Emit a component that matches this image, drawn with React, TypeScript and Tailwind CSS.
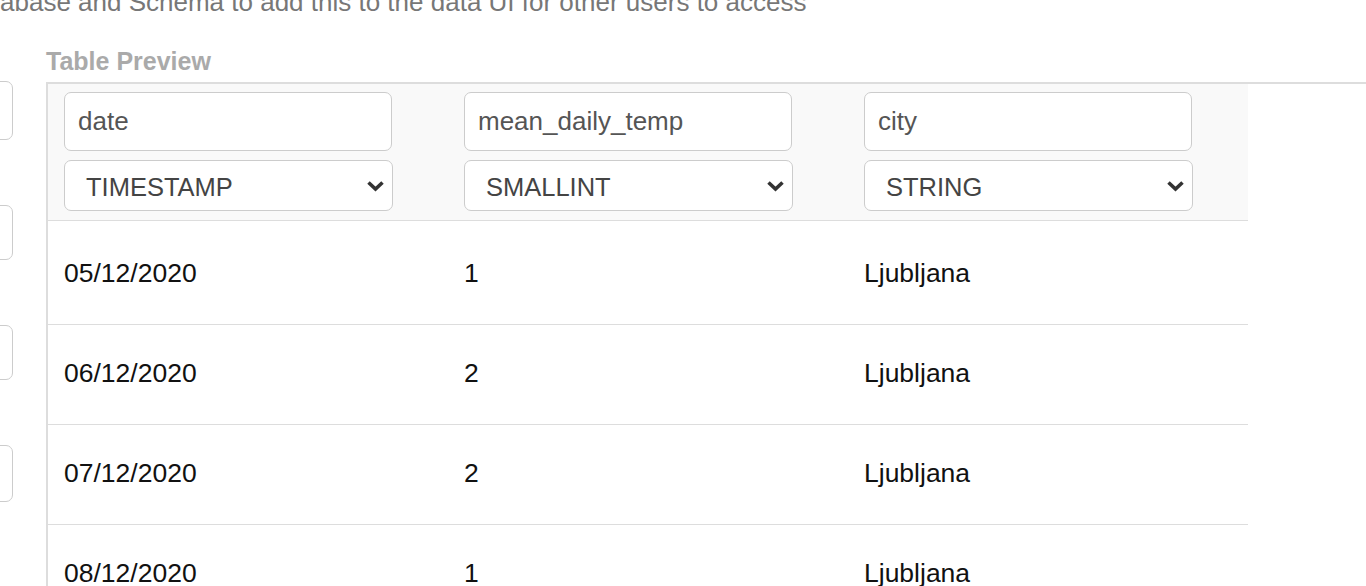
import React from 'react';

const columns = [
  { name: 'date', type: 'TIMESTAMP' },
  { name: 'mean_daily_temp', type: 'SMALLINT' },
  { name: 'city', type: 'STRING' },
];

const rows = [
  ['05/12/2020', '1', 'Ljubljana'],
  ['06/12/2020', '2', 'Ljubljana'],
  ['07/12/2020', '2', 'Ljubljana'],
  ['08/12/2020', '1', 'Ljubljana'],
];

const Chevron = () => (
  <svg width="19" height="12" viewBox="0 0 19 12" className="text-[#333]">
    <path d="M2.5 2.5 L9.5 9 L16.5 2.5" fill="none" stroke="currentColor" strokeWidth="3.6" strokeLinejoin="miter" />
  </svg>
);

export default function App() {
  return (
    <div className="h-[586px] w-[1366px] overflow-hidden bg-white font-['Liberation_Sans',Arial,sans-serif]">
      <div className="-mt-[11px] whitespace-nowrap text-[26px] leading-[26px] text-[#777]">
        abase and Schema to add this to the data UI for other users to access
      </div>

      <div className="flex">
        {/* fields of the form to the left, mostly scrolled out of view */}
        <div className="flex w-[13px] shrink-0 flex-col items-end overflow-hidden">
          <div className="mt-[66px] h-[59px] w-[60px] shrink-0 rounded-[7px] border border-[#ccc]" />
          <div className="mt-[65px] h-[55px] w-[60px] shrink-0 rounded-[7px] border border-[#ccc]" />
          <div className="mt-[65px] h-[55px] w-[60px] shrink-0 rounded-[7px] border border-[#ccc]" />
          <div className="mt-[65px] h-[57px] w-[60px] shrink-0 rounded-[7px] border border-[#ccc]" />
        </div>

        <div className="ml-[33px] flex-1">
          <div className="mt-[34px] text-[25px] font-bold leading-[25px] text-[#aaa]">Table Preview</div>

          <div className="mt-[8px] border-l-2 border-t-2 border-[#ddd]">
            <div className="w-[1200px]">
              <div className="flex h-[137px] border-b border-[#ddd] bg-[#f9f9f9]">
                {columns.map((col) => (
                  <div key={col.name} className="flex w-[400px] flex-col gap-[9px] px-4 pt-2">
                    <div className="flex h-[59px] w-[328px] items-center rounded-[7px] border border-[#ccc] bg-white px-[13px] text-[26px] text-[#555]">
                      {col.name}
                    </div>
                    <div className="flex h-[51px] w-[329px] items-center justify-between rounded-[7px] border border-[#ccc] bg-white pl-[21px] pr-[7px] text-[25.5px] text-[#444]">
                      <span className="pt-[4px]">{col.type}</span>
                      <Chevron />
                    </div>
                  </div>
                ))}
              </div>

              {rows.map((row, i) => (
                <div
                  key={row[0]}
                  className={`flex border-b border-[#ddd] text-[26.5px] leading-[26px] text-[#111] ${
                    i === 0 ? 'h-[104px] pt-[39px]' : 'h-[100px] pt-[35px]'
                  }`}
                >
                  {row.map((cell, j) => (
                    <div key={j} className="w-[400px] px-4">
                      {cell}
                    </div>
                  ))}
                </div>
              ))}
            </div>
          </div>
        </div>
      </div>
    </div>
  );
}
